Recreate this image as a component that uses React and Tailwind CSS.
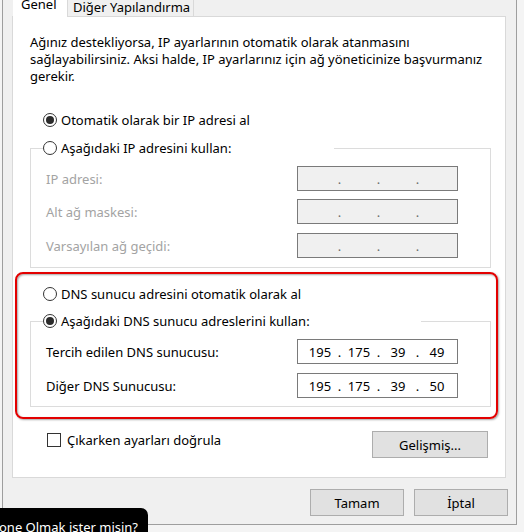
const Radio = ({ checked }) => (
  <span className="w-[14px] h-[14px] rounded-full border border-[#333] bg-white flex items-center justify-center shrink-0">
    {checked && <span className="w-[8px] h-[8px] rounded-full bg-[#2b2b2b]" />}
  </span>
);

const RadioRow = ({ checked, label }) => (
  <div className="flex items-center gap-[4px] h-[16px]">
    <Radio checked={checked} />
    <span className="whitespace-nowrap">{label}</span>
  </div>
);

const IpBox = ({ parts, disabled }) => (
  <div
    className={`w-[161px] h-[25px] border border-[#7a7a7a] flex items-center pl-[5px] ${
      disabled ? 'bg-[#f0f0f0] text-[#6d6d6d]' : 'bg-white text-black'
    }`}
  >
    {parts.map((p, i) => (
      <div key={i} className="flex items-center">
        <span className="w-[34px] text-center">{p}</span>
        {i < 3 && <span className="w-[5px] text-center">.</span>}
      </div>
    ))}
  </div>
);

const Row = ({ label, parts, disabled, className = '' }) => (
  <div className={`flex items-center justify-between ml-[3px] ${className}`}>
    <span className={disabled ? 'text-[#a3a3a3]' : 'text-black'}>{label}</span>
    <IpBox parts={parts} disabled={disabled} />
  </div>
);

const Button = ({ children, className = '' }) => (
  <div
    className={`h-[27px] bg-[#e1e1e1] border border-[#adadad] flex items-center justify-center text-black ${className}`}
  >
    {children}
  </div>
);

const App = () => {
  const empty = ['', '', '', ''];

  return (
    <div className="w-[524px] h-[532px] bg-[#f4f4f4] relative overflow-hidden font-['Noto_Sans',sans-serif] text-[13px] leading-[16px] text-black">
      <div className="ml-[2px] w-[515px] h-[525px] bg-[#f0f0f0] border-l border-r border-b border-[#9e9e9e]">
        {/* tabs */}
        <div className="flex h-[16px] ml-[10px]">
          <div className="w-[55px] h-[17px] bg-white border-r border-[#d9d9d9] relative z-10 pl-[8px]">
            <div className="-mt-[4px]">Genel</div>
          </div>
          <div className="w-[126px] h-[16px] bg-[#f0f0f0] border-r border-[#d9d9d9] pl-[5px]">
            <div className="-mt-[1px]">Diğer Yapılandırma</div>
          </div>
        </div>

        {/* panel */}
        <div className="ml-[9px] w-[494px] h-[462px] bg-white border border-[#d9d9d9] flex flex-col pt-[17px]">
          <p className="ml-[17px] leading-[17px]">
            Ağınız destekliyorsa, IP ayarlarının otomatik olarak atanmasını
            <br />
            sağlayabilirsiniz. Aksi halde, IP ayarlarınız için ağ yöneticinize başvurmanız
            <br />
            gerekir.
          </p>

          <div className="ml-[30px] mt-[27px]">
            <RadioRow checked label="Otomatik olarak bir IP adresi al" />
          </div>

          <fieldset className="ml-[17px] mt-[12px] w-[461px] border border-[#dcdcdc] pl-[12px] pr-[32px] pt-[10px] pb-[9px]">
            <legend className="w-[291px]">
              <RadioRow label="Aşağıdaki IP adresini kullan:" />
            </legend>
            <Row label="IP adresi:" parts={empty} disabled />
            <Row label="Alt ağ maskesi:" parts={empty} disabled className="mt-[8px]" />
            <Row label="Varsayılan ağ geçidi:" parts={empty} disabled className="mt-[9px]" />
          </fieldset>

          {/* highlighted DNS block */}
          <div className="ml-[2px] mt-[4px] w-[483px] border-2 border-[#e30000] rounded-[8px] shadow-[1px_1px_2px_rgba(0,0,0,0.35),inset_1px_1px_2px_rgba(0,0,0,0.35)] pt-[12px] pb-[10px]">
            <div className="ml-[26px]">
              <RadioRow label="DNS sunucu adresini otomatik olarak al" />
            </div>
            <fieldset className="ml-[13px] mt-[11px] w-[461px] border border-[#dcdcdc] pl-[12px] pr-[32px] pt-[10px] pb-[8px]">
              <legend className="w-[378px]">
                <RadioRow checked label="Aşağıdaki DNS sunucu adreslerini kullan:" />
              </legend>
              <Row label="Tercih edilen DNS sunucusu:" parts={['195', '175', '39', '49']} />
              <Row label="Diğer DNS Sunucusu:" parts={['195', '175', '39', '50']} className="mt-[9px]" />
            </fieldset>
          </div>

          <div className="mt-[12px] flex items-start justify-between ml-[34px] mr-[17px]">
            <div className="flex items-center gap-[6px] mt-[1px]">
              <span className="w-[14px] h-[14px] border border-[#333] bg-white" />
              <span>Çıkarken ayarları doğrula</span>
            </div>
            <Button className="w-[116px] h-[26px]">Gelişmiş...</Button>
          </div>
        </div>

        {/* dialog buttons */}
        <div className="flex justify-end gap-[10px] mt-[11px] pr-[8px]">
          <Button className="w-[94px]">Tamam</Button>
          <Button className="w-[94px]">İptal</Button>
        </div>
      </div>

      {/* overlay tooltip */}
      <div className="absolute left-0 bottom-0 w-[148px] h-[24px] bg-black rounded-tr-[7px] overflow-hidden">
        <span className="absolute left-[-1px] top-[13px] text-white text-[13px] leading-none whitespace-nowrap">
          one Olmak ister misin?
        </span>
      </div>
    </div>
  );
};

export default App;
